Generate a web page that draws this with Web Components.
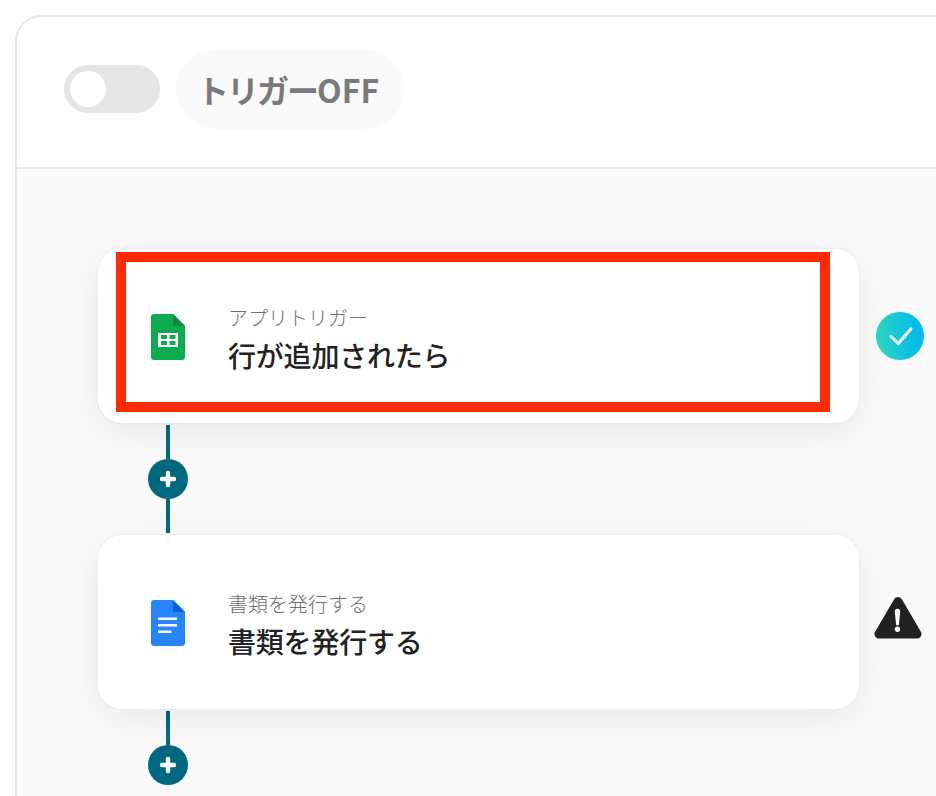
<!DOCTYPE html>
<html lang="ja">
<head>
<meta charset="utf-8">
<title>flow</title>
<style>
  html, body {
    margin: 0;
    height: 796px;
    overflow: hidden;
    background: #ffffff;
    font-family: "Noto Sans CJK JP", "Noto Sans", sans-serif;
  }
</style>
</head>
<body>
<flow-frame>
  <trigger-bar slot="header" label="トリガー" state="OFF"></trigger-bar>
  <flow-step label="アプリトリガー" title-text="行が追加されたら" status="ok" highlight>
    <svg slot="icon" width="34" height="46" viewBox="0 0 34 46">
      <path fill="#0cab50" d="M3 0H22L34 12V43a3 3 0 0 1-3 3H3a3 3 0 0 1-3-3V3a3 3 0 0 1 3-3z"/>
      <path fill="#128a3e" d="M22 0L34 12H22z"/>
      <path fill="#fff" d="M7 19H27V33H7z"/>
      <path fill="#0cab50" d="M10 21H16V25H10zM18.5 21H24.5V25H18.5zM10 27H16V31H10zM18.5 27H24.5V31H18.5z"/>
    </svg>
  </flow-step>
  <flow-connector></flow-connector>
  <flow-step label="書類を発行する" title-text="書類を発行する" status="warn">
    <svg slot="icon" width="34" height="46" viewBox="0 0 34 46">
      <path fill="#2684fc" d="M3 0H22L34 12V43a3 3 0 0 1-3 3H3a3 3 0 0 1-3-3V3a3 3 0 0 1 3-3z"/>
      <path fill="#0066da" d="M22 0L34 12H22z"/>
      <path fill="#fff" d="M7 17.5H26V20H7zM7 24H26V26.5H7zM7 30.5H20.5V33H7z"/>
    </svg>
  </flow-step>
  <flow-connector last></flow-connector>
</flow-frame>

<script>
  const frameTemplate = document.createElement('template')
  frameTemplate.innerHTML = `
    <style>
      :host {
        display: block;
        box-sizing: border-box;
        width: 921px;
        height: 781px;
        margin: 15px 0 0 15px;
        border: solid #e6e6e6;
        border-width: 2px 0 0 2px;
        border-top-left-radius: 26px;
        overflow: hidden;
        background: #ffffff;
      }
      .header {
        height: 150px;
        border-bottom: 2px solid #e6e6e6;
      }
      .canvas {
        height: 100%;
        background: #fafafa;
        padding: 80px 0 0 81px;
      }
    </style>
    <div class="header"><slot name="header"></slot></div>
    <div class="canvas"><slot></slot></div>
  `

  customElements.define('flow-frame',
    class extends HTMLElement {
      constructor() {
        super()
        this.attachShadow({ mode: 'open' })
        this.shadowRoot.appendChild(frameTemplate.content.cloneNode(true))
      }
    }
  )

  const triggerTemplate = document.createElement('template')
  triggerTemplate.innerHTML = `
    <style>
      :host {
        display: flex;
        align-items: center;
        gap: 16px;
        height: 100%;
        padding: 32px 0 38px 47px;
        box-sizing: border-box;
      }
      .toggle {
        display: flex;
        align-items: center;
        width: 96px;
        height: 48px;
        padding: 0 6px;
        box-sizing: border-box;
        border-radius: 24px;
        background: #e5e5e5;
      }
      .knob {
        width: 36px;
        height: 36px;
        border-radius: 50%;
        background: #ffffff;
      }
      .pill {
        display: flex;
        align-items: center;
        width: 228px;
        height: 80px;
        padding-left: 21px;
        box-sizing: border-box;
        border-radius: 40px;
        background: #fafafa;
        color: #7a7a7a;
        font-size: 32px;
        font-weight: 700;
        white-space: nowrap;
      }
      .name { letter-spacing: -2px; }
    </style>
    <div class="toggle"><div class="knob"></div></div>
    <div class="pill"><span class="name"></span><span class="state"></span></div>
  `

  customElements.define('trigger-bar',
    class extends HTMLElement {
      constructor() {
        super()
        this.attachShadow({ mode: 'open' })
        this.shadowRoot.appendChild(triggerTemplate.content.cloneNode(true))
        this.shadowRoot.querySelector('.name').textContent = this.getAttribute('label')
        this.shadowRoot.querySelector('.state').textContent = this.getAttribute('state')
      }
    }
  )

  const stepTemplate = document.createElement('template')
  stepTemplate.innerHTML = `
    <style>
      :host {
        display: flex;
        align-items: center;
        width: 838px;
      }
      .card {
        position: relative;
        display: flex;
        align-items: center;
        gap: 43px;
        width: 761px;
        height: 174px;
        flex: none;
        padding-left: 53px;
        box-sizing: border-box;
        border-radius: 24px;
        background: #ffffff;
        box-shadow: 0 0 2px rgba(0, 0, 0, 0.08), 0 8px 40px rgba(0, 0, 0, 0.08);
      }
      .icon { display: flex; margin-top: 2px; }
      .label, .title { white-space: nowrap; }
      .label {
        line-height: 38px;
        color: #6f6f6f;
        font-size: 20px;
        font-weight: 300;
      }
      .title {
        line-height: 37px;
        color: #222222;
        font-size: 28px;
        font-weight: 500;
        letter-spacing: -0.2px;
      }
      .mark {
        position: absolute;
        left: 18px;
        top: 3px;
        width: 714px;
        height: 160px;
        box-sizing: border-box;
        border: 10px solid #ff2a00;
      }
      .status { display: flex; }
    </style>
    <div class="card">
      <div class="icon"><slot name="icon"></slot></div>
      <div class="text">
        <div class="label"></div>
        <div class="title"></div>
      </div>
    </div>
    <div class="status"></div>
  `

  const okBadge = `
    <svg width="48" height="48" viewBox="0 0 48 48" style="margin-left:17px">
      <defs>
        <linearGradient id="ok" x1="0" y1="0.55" x2="1" y2="0.45">
          <stop offset="0.05" stop-color="#2ad7c3"/>
          <stop offset="0.85" stop-color="#04bbe9"/>
        </linearGradient>
      </defs>
      <circle cx="24" cy="24" r="24" fill="url(#ok)"/>
      <path d="M15 24.5L22.3 31.5L35 16.8" fill="none" stroke="#fff" stroke-width="3" stroke-linecap="round" stroke-linejoin="round"/>
    </svg>`

  const warnBadge = `
    <svg width="48" height="44" viewBox="0 0 48 44" style="margin:0 0 8px 15px">
      <path d="M24 5.5L5 38H43z" fill="#222222" stroke="#222222" stroke-width="9" stroke-linejoin="round"/>
      <path d="M20.8 15.5a2.7 2.7 0 0 1 5.4 0L25 28a1.5 1.5 0 0 1-3 0z" fill="#fff"/>
      <circle cx="23.5" cy="33.2" r="2.7" fill="#fff"/>
    </svg>`

  customElements.define('flow-step',
    class extends HTMLElement {
      constructor() {
        super()
        this.attachShadow({ mode: 'open' })
        this.shadowRoot.appendChild(stepTemplate.content.cloneNode(true))
        this.shadowRoot.querySelector('.label').textContent = this.getAttribute('label')
        this.shadowRoot.querySelector('.title').textContent = this.getAttribute('title-text')
        this.shadowRoot.querySelector('.status').innerHTML = this.getAttribute('status') === 'ok' ? okBadge : warnBadge
        if (this.hasAttribute('highlight')) {
          const mark = document.createElement('div')
          mark.className = 'mark'
          this.shadowRoot.querySelector('.card').appendChild(mark)
        }
      }
    }
  )

  const connectorTemplate = document.createElement('template')
  connectorTemplate.innerHTML = `
    <style>
      :host {
        display: flex;
        flex-direction: column;
        align-items: center;
        width: 40px;
        height: 108px;
        margin: 2px 0 2px 50px;
      }
      :host([last]) .line.bottom { display: none; }
      .line {
        width: 4px;
        height: 34px;
        background: #00687f;
      }
      .add {
        display: flex;
        flex: none;
        width: 40px;
        height: 40px;
        border-radius: 50%;
        background: #00687f;
      }
    </style>
    <div class="line top"></div>
    <div class="add">
      <svg width="40" height="40" viewBox="0 0 40 40">
        <path d="M20 14V26M14 20H26" stroke="#fff" stroke-width="4.4" stroke-linecap="round"/>
      </svg>
    </div>
    <div class="line bottom"></div>
  `

  customElements.define('flow-connector',
    class extends HTMLElement {
      constructor() {
        super()
        this.attachShadow({ mode: 'open' })
        this.shadowRoot.appendChild(connectorTemplate.content.cloneNode(true))
      }
    }
  )
</script>
</body>
</html>
